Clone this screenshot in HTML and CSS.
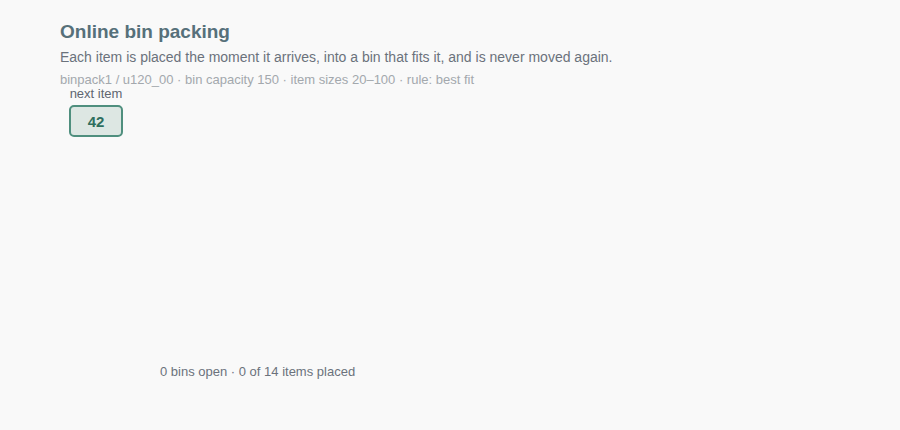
FILE: index.html
```html
<!DOCTYPE html>
<html>
<head>
<meta charset="utf-8">
<link rel="stylesheet" href="styles.css">
</head>
<body>
<main class="page">
  <h1 class="title">Online bin packing</h1>
  <p class="desc">Each item is placed the moment it arrives, into a bin that fits it, and is never moved again.</p>
  <p class="meta">binpack1 / u120_00 · bin capacity 150 · item sizes 20–100 · rule: best fit</p>
  <div class="next">
    <div class="next-label">next item</div>
    <div class="next-box">42</div>
  </div>
  <div class="stage"></div>
  <div class="status">0 bins open · 0 of 14 items placed</div>
</main>
</body>
</html>
```
FILE: styles.css
```css
html, body {
  margin: 0;
  padding: 0;
  background: #f9f9f9;
}
body {
  font-family: "Liberation Sans", Arial, sans-serif;
}
.page {
  padding: 20px 60px 0 60px;
  display: flex;
  flex-direction: column;
  align-items: flex-start;
}
.title {
  margin: 0;
  font-size: 19px;
  font-weight: bold;
  color: #56707a;
  line-height: 24px;
}
.desc {
  margin: 4px 0 0 0;
  font-size: 14px;
  line-height: 18px;
  color: #6b727c;
}
.meta {
  margin: 6px 0 0 0;
  font-size: 13px;
  line-height: 16px;
  color: #a3a8ad;
}
.next {
  margin-top: -1px;
  margin-left: 9px;
  display: flex;
  flex-direction: column;
  align-items: center;
}
.next-label {
  font-size: 13px;
  line-height: 14px;
  color: #5f6670;
}
.next-box {
  margin-top: 4px;
  width: 54px;
  height: 32px;
  box-sizing: border-box;
  border: 2px solid #4f8f7e;
  border-radius: 5px;
  background: #dde7e3;
  color: #2f6f5e;
  font-weight: bold;
  font-size: 15px;
  display: flex;
  align-items: center;
  justify-content: center;
}
.stage {
  height: 227px;
}
.status {
  margin-left: 100px;
  font-size: 13px;
  line-height: 16px;
  color: #6b727c;
}
```
